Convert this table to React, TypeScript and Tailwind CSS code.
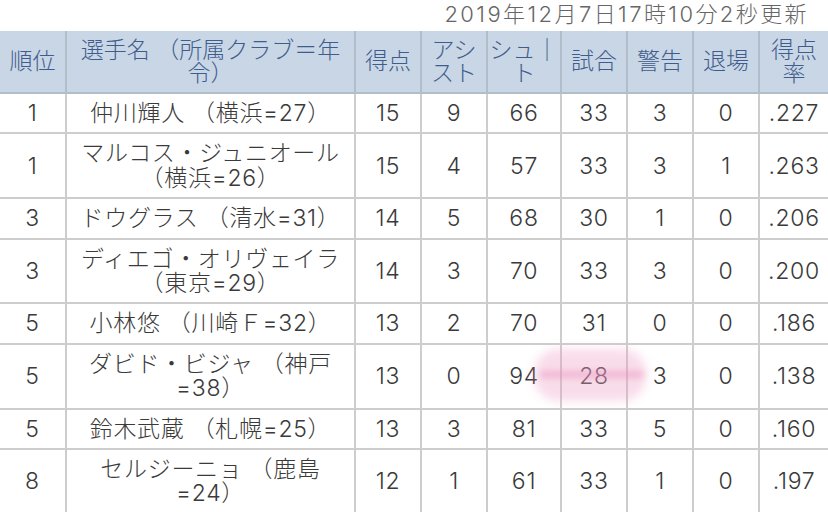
const font = { fontFamily: 'Inter, "Noto Sans CJK JP", "Noto Sans", sans-serif' };

type Row = { rank: string; name: React.ReactNode; pts: string; ast: string; sh: string; gm: string; yc: string; rc: string; rate: string };

const rows: Row[] = [
  { rank: "1", name: "仲川輝人 （横浜=27）", pts: "15", ast: "9", sh: "66", gm: "33", yc: "3", rc: "0", rate: ".227" },
  { rank: "1", name: <>マルコス・ジュニオール<br />（横浜=26）</>, pts: "15", ast: "4", sh: "57", gm: "33", yc: "3", rc: "1", rate: ".263" },
  { rank: "3", name: "ドウグラス （清水=31）", pts: "14", ast: "5", sh: "68", gm: "30", yc: "1", rc: "0", rate: ".206" },
  { rank: "3", name: <>ディエゴ・オリヴェイラ<br />（東京=29）</>, pts: "14", ast: "3", sh: "70", gm: "33", yc: "3", rc: "0", rate: ".200" },
  { rank: "5", name: "小林悠 （川崎Ｆ=32）", pts: "13", ast: "2", sh: "70", gm: "31", yc: "0", rc: "0", rate: ".186" },
  { rank: "5", name: <>ダビド・ビジャ （神戸<br />=38）</>, pts: "13", ast: "0", sh: "94", gm: "28", yc: "3", rc: "0", rate: ".138" },
  { rank: "5", name: "鈴木武蔵 （札幌=25）", pts: "13", ast: "3", sh: "81", gm: "33", yc: "5", rc: "0", rate: ".160" },
  { rank: "8", name: <>セルジーニョ （鹿島<br />=24）</>, pts: "12", ast: "1", sh: "61", gm: "33", yc: "1", rc: "0", rate: ".197" },
];

const th = "border-x-2 border-b-2 border-[#b2bdca] px-0 py-[7px] font-light leading-[23px] text-center align-middle whitespace-nowrap";
const td = "border-2 border-[#cdcdcd] px-0 py-[7px] text-center align-middle whitespace-nowrap tracking-[0.03em]";

export default function App() {
  return (
    <div className="w-[828px] h-[512px] overflow-hidden bg-white text-[#3a3a3a] font-light" style={font}>
      <div className="h-[31px] pr-[19px] text-right text-[22px] leading-[28px] text-[#666] tracking-[0.11em]">
        2019年12月7日17時10分2秒更新
      </div>
      <div className="relative">
        <table className="w-[828px] table-fixed border-collapse border-hidden text-[23px] leading-[24.4px]">
          <colgroup>
            <col className="w-[66px]" />
            <col className="w-[289px]" />
            <col className="w-[66px]" />
            <col className="w-[66px]" />
            <col className="w-[74px]" />
            <col className="w-[66px]" />
            <col className="w-[66px]" />
            <col className="w-[66px]" />
            <col className="w-[69px]" />
          </colgroup>
          <thead className="bg-[#c9d6e6] text-[#3f5d8c]">
            <tr className="h-[62px]">
              <th className={th}>順位</th>
              <th className={th}>選手名 （所属クラブ＝年<br />令）</th>
              <th className={th}>得点</th>
              <th className={th}>アシ<br />スト</th>
              <th className={th}>シュ｜<br />ト</th>
              <th className={th}>試合</th>
              <th className={th}>警告</th>
              <th className={th}>退場</th>
              <th className={th}>得点<br />率</th>
            </tr>
          </thead>
          <tbody>
            {rows.map((r, i) => (
              <tr key={i}>
                <td className={td}>{r.rank}</td>
                <td className={td}>{r.name}</td>
                <td className={td}>{r.pts}</td>
                <td className={td}>{r.ast}</td>
                <td className={td}>{r.sh}</td>
                <td className={td}>{r.gm}</td>
                <td className={td}>{r.yc}</td>
                <td className={td}>{r.rc}</td>
                <td className={td}>{r.rate}</td>
              </tr>
            ))}
            <tr>
              <td className={td}>&nbsp;</td>
              <td className={td}></td>
              <td className={td}></td>
              <td className={td}></td>
              <td className={td}></td>
              <td className={td}></td>
              <td className={td}></td>
              <td className={td}></td>
              <td className={td}></td>
            </tr>
          </tbody>
        </table>
        {/* pink marker stroke */}
        <div className="pointer-events-none absolute left-[534px] top-[318px] h-[52px] w-[112px] rounded-[24px] bg-[#ee9cc4] opacity-35 blur-[5px]" />
        <div className="pointer-events-none absolute left-[540px] top-[340px] h-[7px] w-[104px] rounded-full bg-[#e588b6] opacity-45 blur-[3px]" />
      </div>
    </div>
  );
}
